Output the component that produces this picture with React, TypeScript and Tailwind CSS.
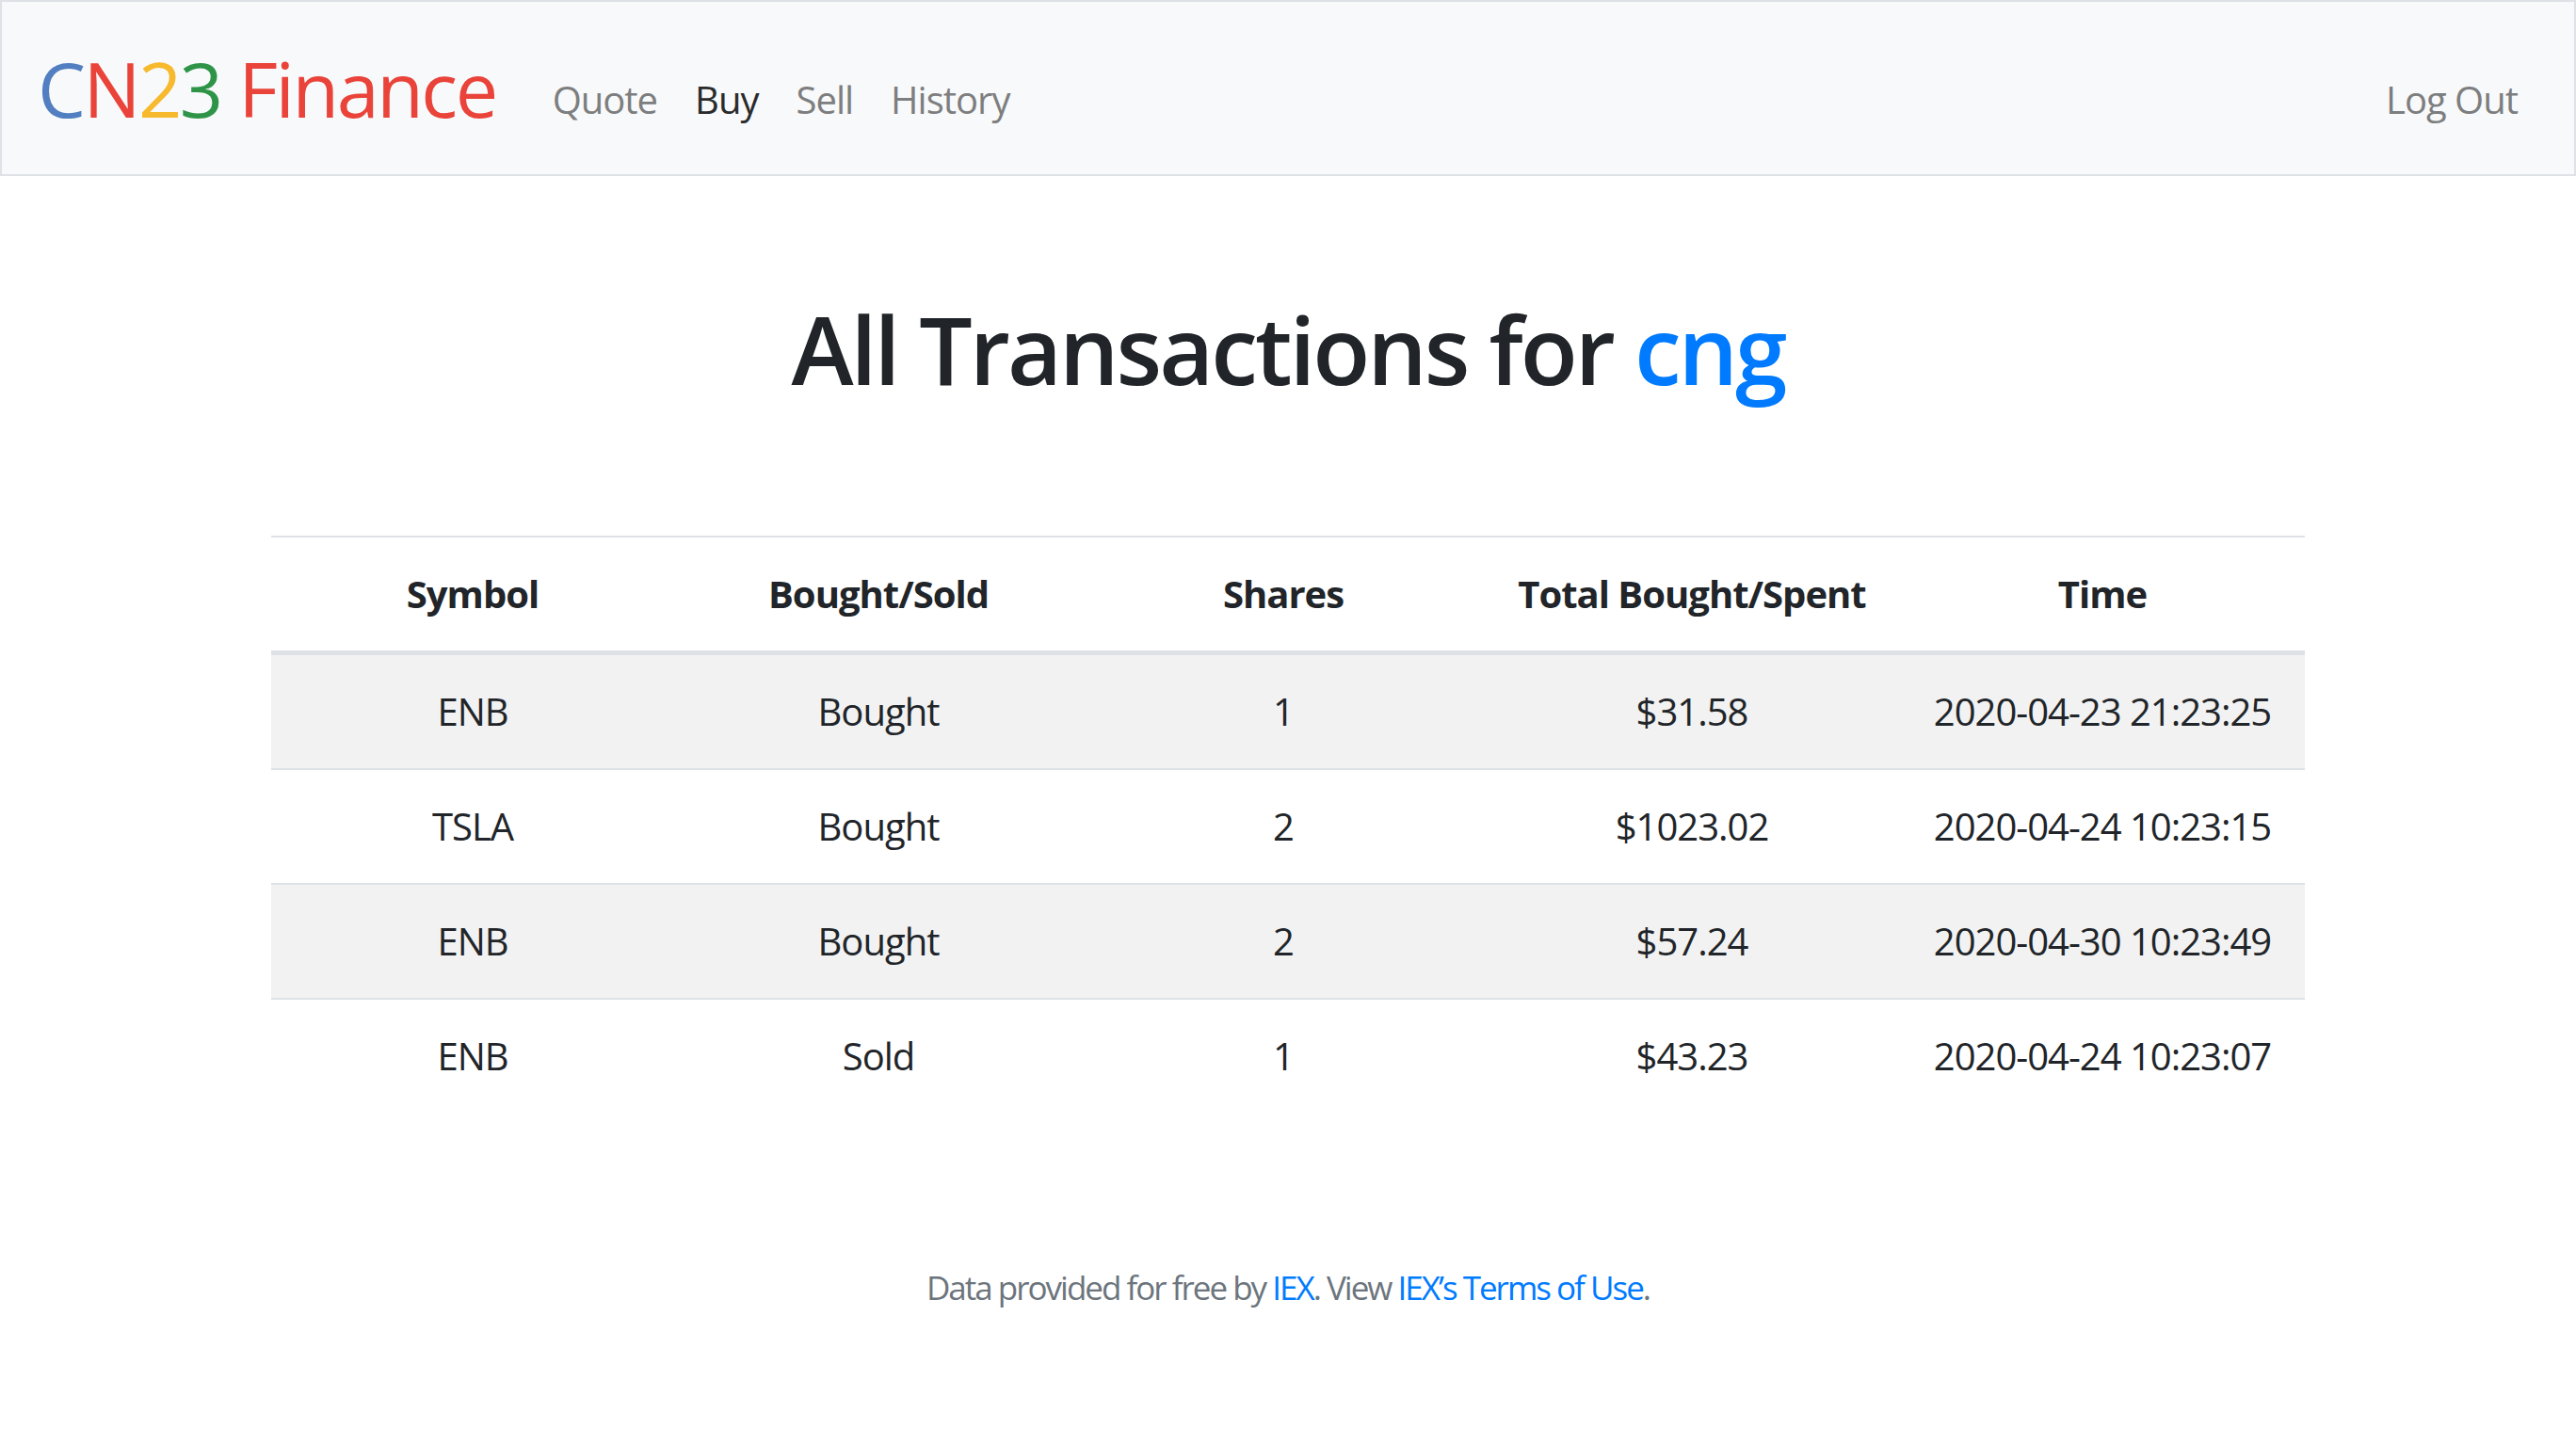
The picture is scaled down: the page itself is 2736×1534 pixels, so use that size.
const rows = [
  { symbol: "ENB", type: "Bought", shares: 1, total: "$31.58", time: "2020-04-23 21:23:25" },
  { symbol: "TSLA", type: "Bought", shares: 2, total: "$1023.02", time: "2020-04-24 10:23:15" },
  { symbol: "ENB", type: "Bought", shares: 2, total: "$57.24", time: "2020-04-30 10:23:49" },
  { symbol: "ENB", type: "Sold", shares: 1, total: "$43.23", time: "2020-04-24 10:23:07" },
];

const colWidths = ["w-[428px]", "w-[434px]", "w-[426px]", "w-[442px]", "w-[430px]"];

function Navbar() {
  return (
    <nav className="flex h-[187px] items-center justify-between border-2 border-[#dee2e6] bg-[#f8f9fa] pr-[40px] pl-[38px]">
      <div className="flex items-center">
        <a href="#" className="mr-[40px] text-[81px] leading-[1.5] tracking-[-2.5px]">
          <span className="text-[#527fc2]">C</span>
          <span className="text-[#e9433a]">N</span>
          <span className="text-[#f7b92d]">2</span>
          <span className="text-[#2e9548]">3</span>
          <span className="text-[#e9433a]"> Finance</span>
        </a>
        <ul className="mt-[24px] flex text-[40px] leading-[1.5] tracking-[-1px] text-[#7d7e7f]">
          <li><a href="#" className="block px-[20px]">Quote</a></li>
          <li><a href="#" className="block px-[20px] text-[#2a2b2c]">Buy</a></li>
          <li><a href="#" className="block px-[20px]">Sell</a></li>
          <li><a href="#" className="block px-[20px]">History</a></li>
        </ul>
      </div>
      <a href="#" className="mt-[24px] px-[20px] text-[40px] leading-[1.5] tracking-[-1px] text-[#7d7e7f]">
        Log Out
      </a>
    </nav>
  );
}

function TransactionsTable() {
  return (
    <table className="mx-auto w-[2160px] border-collapse text-center text-[40px] leading-[60px] tracking-[-1px] text-[#212529]">
      <thead>
        <tr>
          {["Symbol", "Bought/Sold", "Shares", "Total Bought/Spent", "Time"].map((h, i) => (
            <th
              key={h}
              className={`${colWidths[i]} border-t-2 border-b-[5px] border-[#dee2e6] py-[30px] font-bold`}
            >
              {h}
            </th>
          ))}
        </tr>
      </thead>
      <tbody>
        {rows.map((r, i) => (
          <tr key={i} className={i % 2 === 0 ? "bg-[#f2f2f2]" : ""}>
            <td className={i === 0 ? "py-[30px]" : "border-t-2 border-[#dee2e6] py-[30px]"}>{r.symbol}</td>
            <td className={i === 0 ? "py-[30px]" : "border-t-2 border-[#dee2e6] py-[30px]"}>{r.type}</td>
            <td className={i === 0 ? "py-[30px]" : "border-t-2 border-[#dee2e6] py-[30px]"}>{r.shares}</td>
            <td className={i === 0 ? "py-[30px]" : "border-t-2 border-[#dee2e6] py-[30px]"}>{r.total}</td>
            <td className={i === 0 ? "py-[30px]" : "border-t-2 border-[#dee2e6] py-[30px]"}>{r.time}</td>
          </tr>
        ))}
      </tbody>
    </table>
  );
}

export default function App() {
  return (
    <div className="min-h-[1534px] bg-white font-['Open_Sans',sans-serif]">
      <Navbar />
      <main>
        <h1 className="mt-[123px] mb-[139px] text-center text-[100px] leading-[1.2] font-semibold tracking-[-3px] text-[#212529]">
          All Transactions for <span className="text-[#007bff]">cng</span>
        </h1>
        <TransactionsTable />
      </main>
      <footer className="mt-[160px] text-center text-[35px] leading-[1.5] tracking-[-2px] text-[#6c757d]">
        Data provided for free by <a href="#" className="text-[#007bff]">IEX</a>. View{" "}
        <a href="#" className="text-[#007bff]">IEX’s Terms of Use</a>.
      </footer>
    </div>
  );
}
